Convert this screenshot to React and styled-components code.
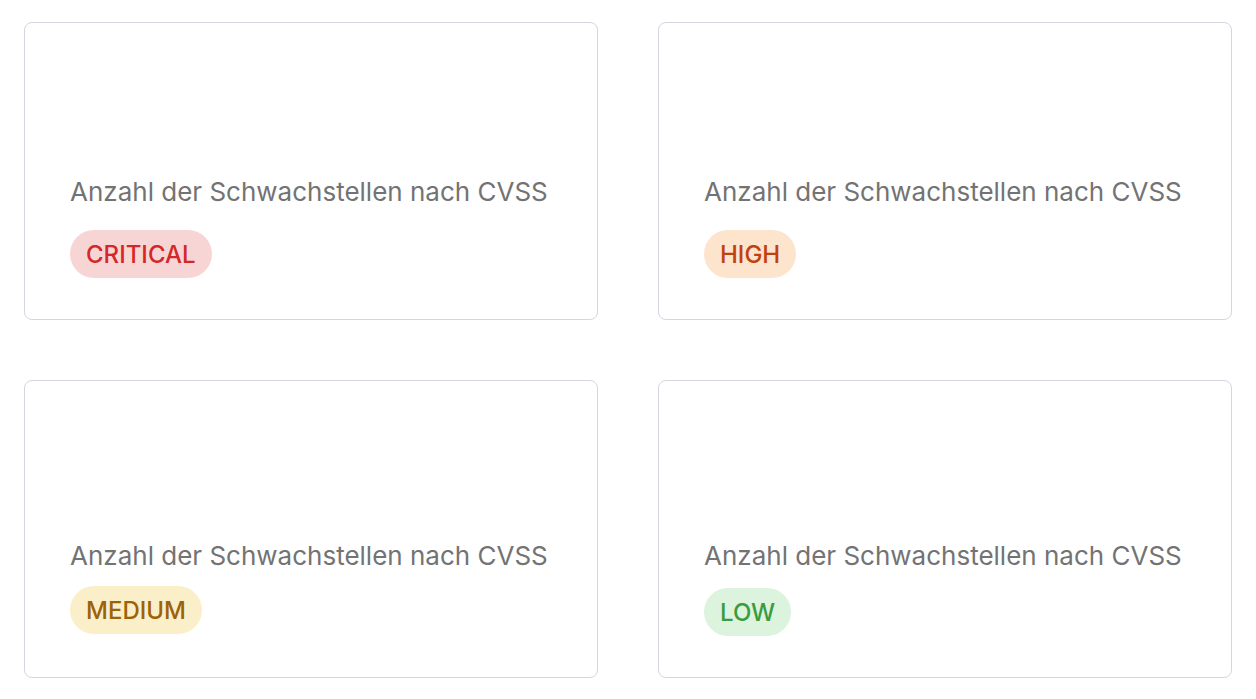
import React from 'react';
import styled, { createGlobalStyle } from 'styled-components';

const GlobalStyle = createGlobalStyle`
  html, body {
    margin: 0;
    padding: 0;
    background: #ffffff;
    font-family: Inter, "Noto Sans", sans-serif;
  }
`;

const Grid = styled.main`
  display: grid;
  grid-template-columns: 574px 574px;
  column-gap: 60px;
  row-gap: 60px;
  padding: 22px 24px;
`;

const Card = styled.section`
  box-sizing: border-box;
  height: 298px;
  border: 1px solid #d4d6de;
  border-radius: 8px;
  background: #fff;
  display: flex;
  flex-direction: column;
  justify-content: flex-end;
  padding: 0 45px ${p => p.$bottom}px;
`;

const Label = styled.p`
  margin: 0 0 ${p => p.$gap}px;
  font-size: 26px;
  line-height: 32px;
  color: #737373;
`;

const Badge = styled.span`
  align-self: flex-start;
  display: inline-flex;
  align-items: center;
  height: 48px;
  padding: 0 16px;
  border-radius: 24px;
  font-size: 24px;
  font-weight: 500;
  background: ${p => p.$bg};
  color: ${p => p.$fg};
`;

const levels = [
  { name: 'CRITICAL', bg: '#f8d5d5', fg: '#d42727', bottom: 41, gap: 22 },
  { name: 'HIGH', bg: '#fde4cd', fg: '#bf420e', bottom: 41, gap: 22 },
  { name: 'MEDIUM', bg: '#fbefca', fg: '#9c6206', bottom: 43, gap: 14 },
  { name: 'LOW', bg: '#dcf3dd', fg: '#3a9c3e', bottom: 41, gap: 16 },
];

export default function App() {
  return (
    <>
      <GlobalStyle />
      <Grid>
        {levels.map(l => (
          <Card key={l.name} $bottom={l.bottom}>
            <Label $gap={l.gap}>Anzahl der Schwachstellen nach CVSS</Label>
            <Badge $bg={l.bg} $fg={l.fg}>{l.name}</Badge>
          </Card>
        ))}
      </Grid>
    </>
  );
}
